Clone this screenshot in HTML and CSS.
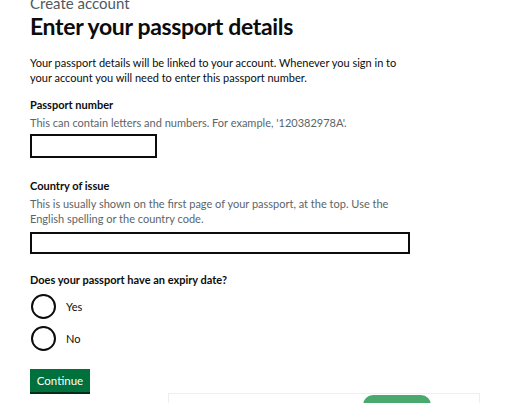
FILE: index.html
```html
<!DOCTYPE html>
<html lang="en">
<head>
<meta charset="utf-8">
<title>Enter your passport details</title>
<link rel="stylesheet" href="styles.css">
</head>
<body>
<main class="page">
  <div class="ghost"></div>
  <span class="caption">Create account</span>
  <h1 class="title">Enter your passport details</h1>
  <p class="lead">Your passport details will be linked to your account. Whenever you sign in to<br>your account you will need to enter this passport number.</p>

  <div class="group">
    <label class="label" for="pn">Passport number</label>
    <div class="hint">This can contain letters and numbers. For example, '120382978A'.</div>
    <input class="input input-short" id="pn" type="text">
  </div>

  <div class="group">
    <label class="label" for="ci">Country of issue</label>
    <div class="hint">This is usually shown on the first page of your passport, at the top. Use the<br>English spelling or the country code.</div>
    <input class="input input-long" id="ci" type="text">
  </div>

  <fieldset class="fieldset">
    <legend class="label legend">Does your passport have an expiry date?</legend>
    <label class="radio"><span class="circle"></span><span class="radio-text">Yes</span></label>
    <label class="radio"><span class="circle"></span><span class="radio-text">No</span></label>
  </fieldset>

  <button class="button" type="button">Continue</button>

  <div class="below"><span class="pill"></span></div>
</main>
</body>
</html>
```

FILE: styles.css
```css
html, body {
  margin: 0;
  padding: 0;
  background: #ffffff;
  overflow: hidden;
}
body {
  font-family: Lato, "Noto Sans", sans-serif;
  color: #0b0c0c;
}
.page {
  position: relative;
  padding-left: 30px;
  width: 498px;
}
.ghost {
  position: absolute;
  left: 265px;
  top: 180px;
  width: 122px;
  height: 46px;
  border-radius: 23px;
  background: #f9f9f9;
  z-index: -1;
}
.caption {
  display: block;
  font-size: 15px;
  line-height: 16px;
  margin-top: -5px;
  color: #505a5f;
}
.title {
  margin: 1px 0 0;
  font-size: 23px;
  line-height: 28px;
  font-weight: 700;
  letter-spacing: -0.35px;
}
.lead {
  margin: 15px 0 0;
  font-size: 11px;
  line-height: 15px;
}
.group {
  margin-top: 12px;
}
.group + .group {
  margin-top: 20px;
}
.label {
  display: block;
  font-size: 11px;
  line-height: 15px;
  font-weight: 700;
}
.hint {
  margin-top: 3px;
  font-size: 11px;
  line-height: 15px;
  color: #5b6569;
}
.input {
  display: block;
  box-sizing: border-box;
  margin: 4px 0 0;
  height: 24px;
  border: 2px solid #0b0c0c;
  border-radius: 0;
  background: #fff;
  padding: 0;
}
.input-short { width: 127px; }
.input-long { width: 380px; height: 22px; margin-top: 6px; }
.fieldset {
  border: 0;
  margin: 18px 0 0;
  padding: 0;
}
.legend {
  padding: 0;
  margin-bottom: 6px;
}
.radio {
  display: flex;
  align-items: center;
  gap: 10px;
  height: 26px;
  margin-bottom: 6px;
  font-size: 11px;
}
.circle {
  box-sizing: border-box;
  width: 25px;
  height: 25px;
  border: 2px solid #0b0c0c;
  border-radius: 50%;
  margin-left: 1px;
}
.button {
  display: block;
  margin-top: 12px;
  box-sizing: border-box;
  width: 60px;
  height: 23px;
  border: 0;
  border-radius: 0;
  background: #00703c;
  box-shadow: 0 2px 0 #002d18;
  color: #fff;
  font-family: inherit;
  font-size: 11.5px;
  padding: 0;
}
.below {
  margin: 1px 0 0 138px;
  width: 310px;
  height: 12px;
  border: 1px solid #eeeeee;
  border-bottom: 0;
  position: relative;
}
.pill {
  position: absolute;
  left: 194px;
  top: 1px;
  width: 68px;
  height: 20px;
  border-radius: 10px;
  background: #4aa96c;
}
```
